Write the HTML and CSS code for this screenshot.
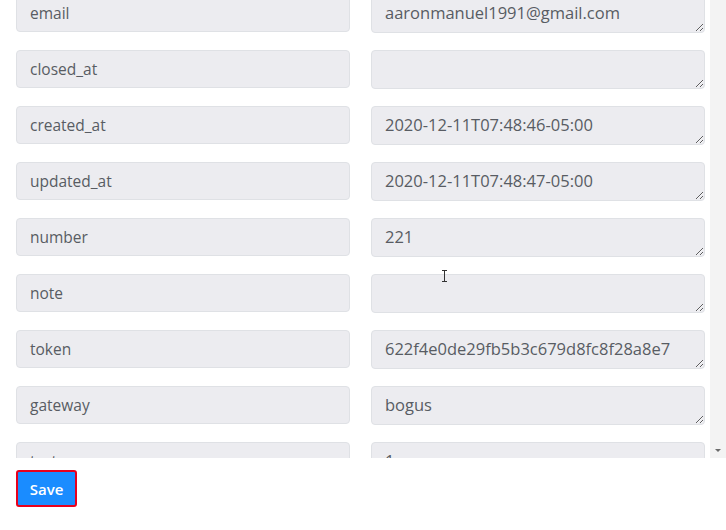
FILE: index.html
```html
<!DOCTYPE html>
<html lang="en">

<head>
    <meta charset="UTF-8">
    <meta name="viewport" content="width=device-width, initial-scale=1.0">
    <title>order</title>
    <link rel="stylesheet" href="styles.css">
</head>

<body>
    <div class="pane">
        <div class="fields">
            <div class="key">email</div>
            <textarea class="val" rows="1">aaronmanuel1991@gmail.com</textarea>
            <div class="key">closed_at</div>
            <textarea class="val" rows="1"></textarea>
            <div class="key">created_at</div>
            <textarea class="val" rows="1">2020-12-11T07:48:46-05:00</textarea>
            <div class="key">updated_at</div>
            <textarea class="val" rows="1">2020-12-11T07:48:47-05:00</textarea>
            <div class="key">number</div>
            <textarea class="val" rows="1">221</textarea>
            <div class="key">note</div>
            <textarea class="val" rows="1"></textarea>
            <div class="key">token</div>
            <textarea class="val" rows="1">622f4e0de29fb5b3c679d8fc8f28a8e7</textarea>
            <div class="key">gateway</div>
            <textarea class="val" rows="1">bogus</textarea>
            <div class="key">test</div>
            <textarea class="val" rows="1">1</textarea>
            <div class="key">total_price</div>
            <textarea class="val" rows="1">10.00</textarea>
        </div>
        <div class="scrollbar">
            <span class="arrow"></span>
        </div>
        <svg class="cursor" width="7" height="12" viewBox="0 0 7 12">
            <path d="M1 0.5 H6 M3.5 0.5 V11.5 M1 11.5 H6" stroke="#333" stroke-width="1" fill="none" />
        </svg>
    </div>
    <div class="footer">
        <button class="save">Save</button>
    </div>
</body>

</html>
```

FILE: styles.css
```css
body {
    margin: 0;
    font-family: "Open Sans", "Noto Sans", sans-serif;
    color: #585c63;
    background: #fff;
}

.pane {
    position: relative;
    display: flex;
    height: 458px;
    overflow: hidden;
}

.fields {
    flex: 1;
    display: grid;
    grid-template-columns: 334px 334px;
    grid-auto-rows: 38px;
    column-gap: 21px;
    row-gap: 18px;
    align-content: start;
    padding: 0 5px 0 16px;
    margin-top: -6px;
}

.key,
.val {
    box-sizing: border-box;
    height: 38px;
    border: 1px solid #dfe1e5;
    border-radius: 4px;
    background: #ececf0;
    font-family: inherit;
    font-size: 15.5px;
    color: #585c63;
}

.key {
    display: flex;
    align-items: center;
    padding: 0 13px;
}

.val {
    height: 39px;
    width: 334px;
    margin: 0;
    padding: 7px 13px;
    line-height: 22px;
    font-size: 16.5px;
    resize: vertical;
    overflow: hidden;
}

.scrollbar {
    position: relative;
    width: 16px;
    background: #f3f3f3;
}

.arrow {
    position: absolute;
    left: 5px;
    bottom: 6px;
    border-left: 3px solid transparent;
    border-right: 3px solid transparent;
    border-top: 3px solid #6b6b6b;
}

.cursor {
    position: absolute;
    left: 441px;
    top: 270px;
}

.footer {
    padding: 12px 16px;
}

.save {
    box-sizing: border-box;
    width: 61px;
    height: 37px;
    padding: 0;
    border: 2px solid #e8001c;
    border-radius: 3px;
    background: #1a8cff;
    color: #fff;
    font-family: inherit;
    font-size: 15px;
    font-weight: 600;
}
```
